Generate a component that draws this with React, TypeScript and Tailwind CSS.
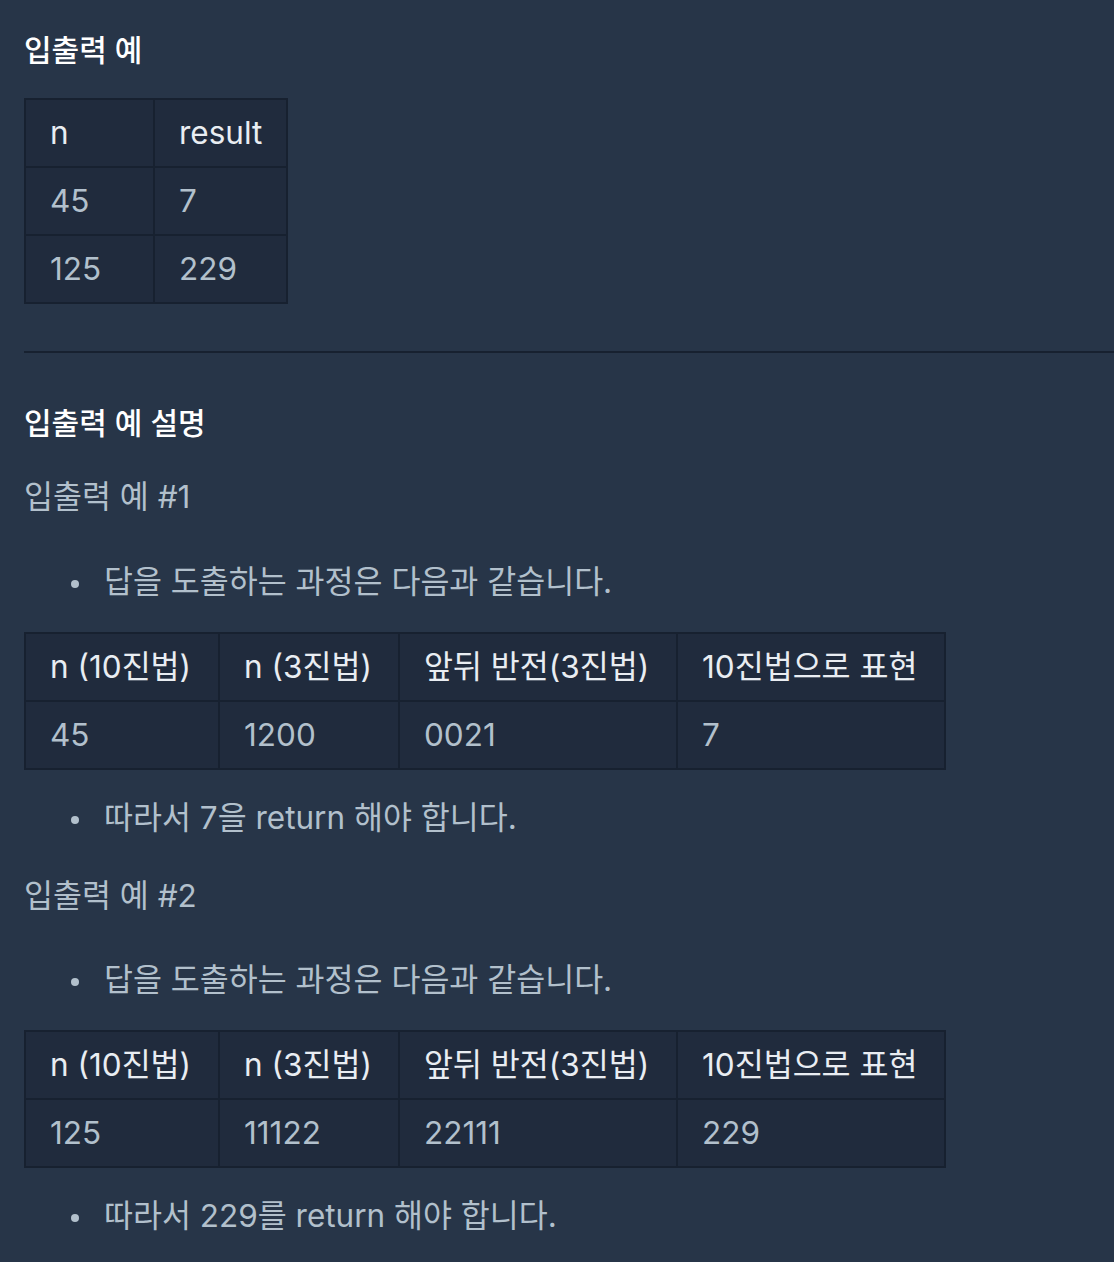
import React from "react";

const font = "font-['Inter','Noto_Sans_CJK_KR',sans-serif]";

type Table = { cols: string; head: string[]; rows: string[][] };

const example: Table = {
	cols: "grid-cols-[127px_131px]",
	head: ["n", "result"],
	rows: [
		["45", "7"],
		["125", "229"],
	],
};

const case1: Table = {
	cols: "grid-cols-[192px_178px_276px_266px]",
	head: ["n (10진법)", "n (3진법)", "앞뒤 반전(3진법)", "10진법으로 표현"],
	rows: [["45", "1200", "0021", "7"]],
};

const case2: Table = {
	cols: "grid-cols-[192px_178px_276px_266px]",
	head: ["n (10진법)", "n (3진법)", "앞뒤 반전(3진법)", "10진법으로 표현"],
	rows: [["125", "11122", "22111", "229"]],
};

function DataTable({ table, className }: { table: Table; className?: string }) {
	return (
		<div className={`grid w-fit gap-[2px] bg-[#172130] p-[2px] ${table.cols} ${className ?? ""}`}>
			{table.head.map((h) => (
				<div key={h} className="flex h-[66px] items-center bg-[#202b3d] pl-[24px] text-[31.5px] whitespace-nowrap text-[#e9edf2]">
					{h}
				</div>
			))}
			{table.rows.flat().map((c, i) => (
				<div key={i} className="flex h-[66px] items-center bg-[#202b3d] pl-[24px] text-[31.5px] text-[#b2c0cc]">
					{c}
				</div>
			))}
		</div>
	);
}

function Bullet({ children, className }: { children: React.ReactNode; className?: string }) {
	return (
		<div className={`flex h-[40px] items-center text-[31.5px] leading-[40px] text-[#b2c0cc] ${className ?? ""}`}>
			<span className="ml-[47px] mt-[4px] h-[8px] w-[8px] shrink-0 rounded-full bg-[#b2c0cc]" />
			<span className="ml-[25px]">{children}</span>
		</div>
	);
}

export default function App() {
	return (
		<div className={`h-[1262px] w-[1114px] overflow-hidden bg-[#273548] pl-[24px] ${font}`}>
			<h5 className="mt-[30px] text-[30px] font-medium leading-[40px] text-white">입출력 예</h5>
			<DataTable table={example} className="mt-[28px]" />

			<hr className="mt-[47px] border-0 border-t-2 border-[#172130]" />

			<h5 className="mt-[50px] text-[30px] font-medium leading-[40px] text-white">입출력 예 설명</h5>

			<p className="mt-[34px] text-[31.5px] leading-[40px] text-[#b2c0cc]">입출력 예 #1</p>
			<Bullet className="mt-[45px]">답을 도출하는 과정은 다음과 같습니다.</Bullet>
			<DataTable table={case1} className="mt-[30px]" />
			<Bullet className="mt-[28px]">따라서 7을 return 해야 합니다.</Bullet>

			<p className="mt-[38px] text-[31.5px] leading-[40px] text-[#b2c0cc]">입출력 예 #2</p>
			<Bullet className="mt-[44px]">답을 도출하는 과정은 다음과 같습니다.</Bullet>
			<DataTable table={case2} className="mt-[30px]" />
			<Bullet className="mt-[28px]">따라서 229를 return 해야 합니다.</Bullet>
		</div>
	);
}
